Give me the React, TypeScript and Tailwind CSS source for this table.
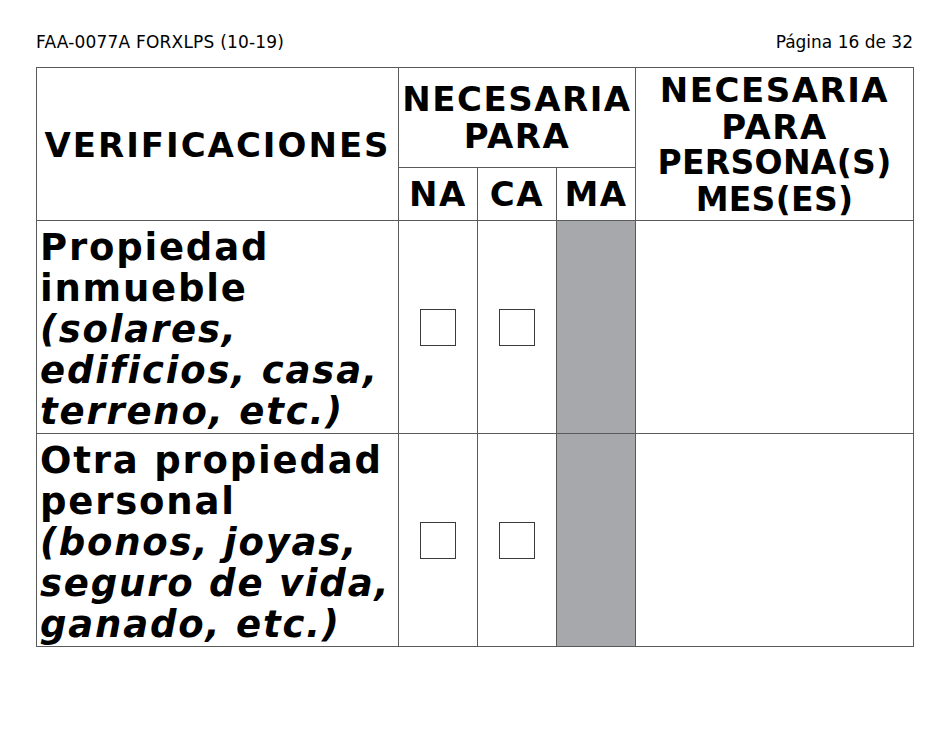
import React from "react";

const font = { fontFamily: '"DejaVu Sans", Verdana, sans-serif' };

function Box() {
  return <div className="w-[36px] h-[37px] border border-[#3a3a3a] bg-white" />;
}

function Row({ title, sub }: { title: string[]; sub: string[] }) {
  return (
    <>
      <div className="border-r border-b border-[#5a5a5a] pl-[3px] pt-[6px] text-[37px] leading-[41px] tracking-[1.8px] font-bold text-black whitespace-nowrap">
        {title.map((t) => (
          <div key={t}>{t}</div>
        ))}
        {sub.map((t) => (
          <div key={t} className="italic">
            {t}
          </div>
        ))}
      </div>
      <div className="border-r border-b border-[#5a5a5a] flex items-center justify-center">
        <Box />
      </div>
      <div className="border-r border-b border-[#5a5a5a] flex items-center justify-center">
        <Box />
      </div>
      <div className="border-r border-b border-[#5a5a5a] bg-[#a7a8ab]" />
      <div className="border-r border-b border-[#5a5a5a]" />
    </>
  );
}

export default function App() {
  return (
    <div className="w-[950px] h-[733px] bg-white text-black" style={font}>
      <div className="flex justify-between pl-[36px] pr-[37px] pt-[32px] h-[67px] text-[17px] leading-[20px]">
        <span className="tracking-[0.2px]">FAA-0077A FORXLPS (10-19)</span>
        <span>Página 16 de 32</span>
      </div>
      <div className="ml-[36px] w-[878px] grid grid-cols-[362px_79px_79px_79px_278px] grid-rows-[100px_53px_213px_213px] border-l border-t border-[#5a5a5a] font-bold">
        <div className="row-span-2 border-r border-b border-[#5a5a5a] flex items-center justify-center text-[34px] tracking-[2px] pt-[2px] whitespace-nowrap">
          VERIFICACIONES
        </div>
        <div className="col-span-3 border-r border-b border-[#5a5a5a] flex flex-col items-center justify-center text-[34px] leading-[37px] tracking-[1.5px] pt-[1px]">
          <div>NECESARIA</div>
          <div>PARA</div>
        </div>
        <div className="row-span-2 border-r border-b border-[#5a5a5a] flex flex-col items-center justify-center leading-[36.5px] pt-[2px] whitespace-nowrap">
          <div className="text-[34px] tracking-[1.5px]">NECESARIA</div>
          <div className="text-[34px] tracking-[1.5px]">PARA</div>
          <div className="text-[33px] tracking-[0.3px]">PERSONA(S)</div>
          <div className="text-[33px] tracking-[0.3px]">MES(ES)</div>
        </div>
        <div className="border-r border-b border-[#5a5a5a] flex items-center justify-center text-[34px] tracking-[1.5px]">
          NA
        </div>
        <div className="border-r border-b border-[#5a5a5a] flex items-center justify-center text-[34px] tracking-[1.5px]">
          CA
        </div>
        <div className="border-r border-b border-[#5a5a5a] flex items-center justify-center text-[34px] tracking-[1.5px]">
          MA
        </div>
        <Row title={["Propiedad", "inmueble"]} sub={["(solares,", "edificios, casa,", "terreno, etc.)"]} />
        <Row title={["Otra propiedad", "personal"]} sub={["(bonos, joyas,", "seguro de vida,", "ganado, etc.)"]} />
      </div>
    </div>
  );
}
